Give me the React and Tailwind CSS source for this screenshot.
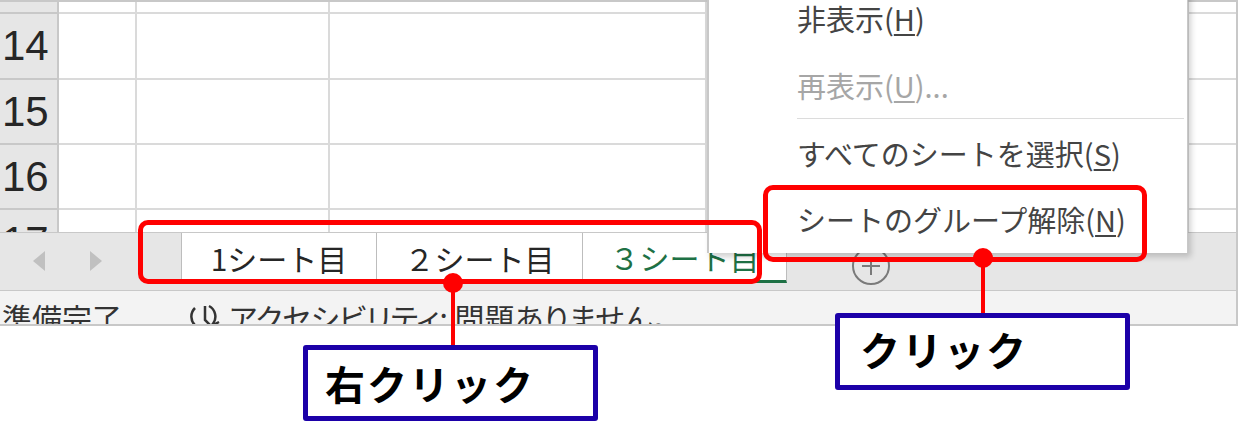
import React from 'react';

const jp = { fontFamily: '"Noto Sans CJK JP", "Noto Sans", sans-serif' };

const rows = [
  { label: '', h: 'h-[12px]' },
  { label: '14', h: 'h-[66px]' },
  { label: '15', h: 'h-[65px]' },
  { label: '16', h: 'h-[65px]' },
  { label: '17', h: 'h-[65px]' },
];

const cols = ['w-[78px]', 'w-[193px]', 'w-[377px]', 'w-[482px]', 'w-[60px]'];

function Grid() {
  return (
    <div className="h-[232px] overflow-hidden border-t-2 border-[#c8c8c8] flex flex-col shrink-0">
      {rows.map((r) => (
        <div key={r.label || 'head'} className={`flex shrink-0 ${r.h}`}>
          <div className="w-[59px] shrink-0 bg-[#e6e6e6] border-r-2 border-b-2 border-[#c8c8c8] flex items-center pl-[2px] text-[42px] leading-none text-[#262626] font-['Liberation_Sans',sans-serif]">
            {r.label}
          </div>
          {cols.map((w, i) => (
            <div key={i} className={`${w} shrink-0 bg-white border-r-2 border-b-2 border-[#dadada]`} />
          ))}
        </div>
      ))}
    </div>
  );
}

function ContextMenu() {
  const item = 'h-[67px] flex items-center pl-[88px] text-[29px] leading-none';
  return (
    <div
      className="absolute left-[707px] top-[-15px] w-[481px] h-[268px] bg-white border-l-2 border-r border-[#c8c8c8] shadow-[3px_4px_6px_rgba(0,0,0,0.18)] flex flex-col"
      style={jp}
    >
      <div className={`${item} text-[#444]`}>
        非表示(<span className="underline underline-offset-[3px]">H</span>)
      </div>
      <div className={`${item} h-[64px] pt-[3px] text-[#a6a6a6]`}>
        再表示(<span className="underline underline-offset-[3px]">U</span>)...
      </div>
      <div className="h-px ml-[88px] mr-[3px] bg-[#dcdcdc]" />
      <div className="h-[2px]" />
      <div className={`${item} text-[#444]`}>
        すべてのシートを選択(<span className="underline underline-offset-[3px]">S</span>)
      </div>
      <div className={`${item} text-[#444]`}>
        シートのグループ解除(<span className="underline underline-offset-[3px]">N</span>)
      </div>
    </div>
  );
}

function TabBar() {
  return (
    <div className="h-[59px] shrink-0 bg-[#e6e6e6] border-t border-b border-[#c8c8c8] flex items-start" style={jp}>
      <div className="w-[181px] h-[50px] shrink-0 flex items-center">
        <svg width="181" height="50" viewBox="0 0 181 50">
          <polygon points="45,18 33,28 45,38" fill="#c0c0c0" />
          <polygon points="90,18 102,28 90,38" fill="#c0c0c0" />
        </svg>
      </div>
      <div className="w-[195px] h-[50px] bg-white flex items-center justify-center text-[30px] leading-none text-[#262626] border-l border-[#bdbdbd]">
        1シート目
      </div>
      <div className="w-[207px] h-[50px] bg-white flex items-center justify-center text-[30px] leading-none text-[#262626] border-l border-r border-[#bdbdbd]">
        ２シート目
      </div>
      <div className="w-[204px] h-[50px] bg-white flex items-center justify-center text-[30px] leading-none text-[#1e7145] border-r border-[#bdbdbd] border-b-[3px] border-b-[#1e7145]">
        ３シート目
      </div>
      <div className="ml-[64px] mt-[13px]">
        <svg width="40" height="40" viewBox="0 0 40 40" fill="none" stroke="#7a7a7a" strokeWidth="2">
          <circle cx="20" cy="20" r="18" />
          <path d="M20 11v18M11 20h18" />
        </svg>
      </div>
    </div>
  );
}

function StatusBar() {
  return (
    <div className="flex-1 bg-[#f3f3f3] overflow-hidden flex items-start pt-[11px] text-[30px] leading-none text-[#333]" style={jp}>
      <span className="ml-[2px] w-[183px] shrink-0">準備完了</span>
      <svg width="40" height="34" viewBox="0 0 40 34" fill="none" stroke="#333" strokeWidth="2.5" className="shrink-0">
        <path d="M10 6a12 12 0 1 0 14 -2" />
        <path d="M20 4v14l6 6" />
        <path d="M26 24l8 -4" />
      </svg>
      <span className="ml-[4px] [font-feature-settings:'palt']">アクセシビリティ: 問題ありません。</span>
    </div>
  );
}

function Callouts() {
  return (
    <>
      {/* red frames */}
      <div className="absolute left-[138px] top-[220px] w-[624px] h-[64px] border-[5px] border-[#ff0000] rounded-[10px]" />
      <div className="absolute left-[763px] top-[185px] w-[384px] h-[77px] border-[5px] border-[#ff0000] rounded-[10px]" />

      {/* leader lines */}
      <div className="absolute left-[451px] top-[283px] w-[4px] h-[63px] bg-[#ff0000]" />
      <div className="absolute left-[443px] top-[273px] w-[20px] h-[20px] rounded-full bg-[#ff0000]" />
      <div className="absolute left-[981px] top-[258px] w-[4px] h-[56px] bg-[#ff0000]" />
      <div className="absolute left-[973px] top-[248px] w-[20px] h-[20px] rounded-full bg-[#ff0000]" />

      {/* labels */}
      <div
        className="absolute left-[303px] top-[345px] w-[295px] h-[76px] border-[5px] border-[#1c00a8] rounded-[3px] bg-white flex items-center pl-[17px] text-[40px] leading-none font-bold tracking-[2px] text-black"
        style={jp}
      >
        右クリック
      </div>
      <div
        className="absolute left-[835px] top-[313px] w-[295px] h-[77px] border-[5px] border-[#1c00a8] rounded-[3px] bg-white flex items-center pl-[20px] pb-[6px] text-[40px] leading-none font-bold tracking-[2px] text-black"
        style={jp}
      >
        クリック
      </div>
    </>
  );
}

export default function App() {
  return (
    <div className="relative w-[1240px] h-[435px] bg-white overflow-hidden">
      <div className="relative w-[1238px] h-[326px] border-r-2 border-b-2 border-[#c8c8c8] flex flex-col overflow-hidden">
        <Grid />
        <TabBar />
        <StatusBar />
        <ContextMenu />
      </div>
      <Callouts />
    </div>
  );
}
